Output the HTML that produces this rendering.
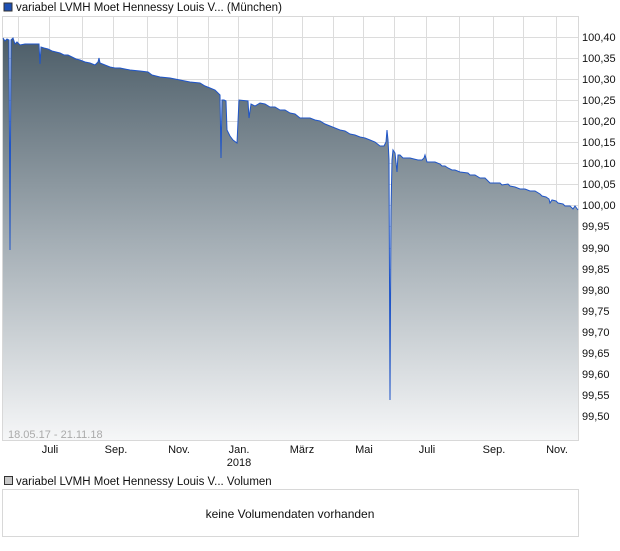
<!DOCTYPE html>
<html><head><meta charset="utf-8"><style>
body{margin:0;background:#fff;width:620px;height:546px;overflow:hidden;font-family:"Liberation Sans",sans-serif;}
</style></head><body>
<svg width="620" height="546" xmlns="http://www.w3.org/2000/svg" font-family="Liberation Sans, sans-serif">
<defs><linearGradient id="g" x1="0" y1="37" x2="0" y2="441" gradientUnits="userSpaceOnUse">
<stop offset="0" stop-color="#4c5d68"/><stop offset="0.5" stop-color="#a3adb4"/><stop offset="1" stop-color="#f6f7f8"/></linearGradient>
<path id="p" d="M3 38L5 41L7 39L9 40L10 250L11 40L13 38L15 44L17 42L20 45L25 44L30 44L37 44L39 44L40 64L41 47L44 48L48 49L52 51L56 52L60 53L64 55L68 55L72 57L76 59L80 60L85 62L90 63L95 65L98 62L99 58L100 63L105 65L110 67L115 68L120 68L130 70L140 71L148 72L152 75L160 77L170 78L180 80L190 82L200 83L205 86L210 88L215 90L218 93L220 95L221 158L222 100L224 100L226 101L227 130L230 136L233 140L237 143L239 100L248 101L249 118L251 104L255 106L260 103L265 104L270 107L275 107L280 110L285 110L290 113L295 114L300 118L305 118L310 118L315 120L320 121L325 124L330 126L335 128L340 130L345 131L350 134L355 135L360 137L365 138L370 140L375 142L380 146L384 146L386 142L387 130L388 140L389 160L390 400L391 210L392 160L393 150L395 153L397 172L398 155L400 155L403 158L410 158L418 160L422 160L424 158L425 155L427 162L435 162L440 164L442 166L445 166L448 168L452 170L455 170L460 172L468 173L470 175L475 175L480 178L485 178L490 183L500 183L502 185L508 184L510 186L515 187L520 189L525 189L530 191L535 191L540 194L542 196L546 197L549 199L550 203L552 200L556 201L558 203L563 204L565 206L570 206L573 209L575 206L578 210"/>
</defs>
<rect x="4" y="3" width="8" height="8" fill="#1d4fb3" stroke="#333" stroke-width="1"/>
<text x="16" y="11" font-size="11.5" fill="#111">variabel LVMH Moet Hennessy Louis V... (München)</text>
<g stroke="#dcdcdc" stroke-width="1">
<path d="M18.5 16V441M49.5 16V441M82.5 16V441M113.5 16V441M147.5 16V441M177.5 16V441M208.5 16V441M238.5 16V441M272.5 16V441M302.5 16V441M333.5 16V441M363.5 16V441M394.5 16V441M426.5 16V441M459.5 16V441M493.5 16V441M523.5 16V441M556.5 16V441"/>
<path d="M2 37.5H578M2 58.5H578M2 79.5H578M2 100.5H578M2 121.5H578M2 142.5H578M2 163.5H578M2 184.5H578M2 205.5H578M2 226.5H578M2 248.5H578M2 269.5H578M2 290.5H578M2 311.5H578M2 332.5H578M2 353.5H578M2 374.5H578M2 395.5H578M2 416.5H578"/>
</g>
<rect x="2.5" y="16.5" width="576" height="424" fill="none" stroke="#d8d8d8"/>
<path d="M3 38L5 41L7 39L9 40L10 250L11 40L13 38L15 44L17 42L20 45L25 44L30 44L37 44L39 44L40 64L41 47L44 48L48 49L52 51L56 52L60 53L64 55L68 55L72 57L76 59L80 60L85 62L90 63L95 65L98 62L99 58L100 63L105 65L110 67L115 68L120 68L130 70L140 71L148 72L152 75L160 77L170 78L180 80L190 82L200 83L205 86L210 88L215 90L218 93L220 95L221 158L222 100L224 100L226 101L227 130L230 136L233 140L237 143L239 100L248 101L249 118L251 104L255 106L260 103L265 104L270 107L275 107L280 110L285 110L290 113L295 114L300 118L305 118L310 118L315 120L320 121L325 124L330 126L335 128L340 130L345 131L350 134L355 135L360 137L365 138L370 140L375 142L380 146L384 146L386 142L387 130L388 140L389 160L390 400L391 210L392 160L393 150L395 153L397 172L398 155L400 155L403 158L410 158L418 160L422 160L424 158L425 155L427 162L435 162L440 164L442 166L445 166L448 168L452 170L455 170L460 172L468 173L470 175L475 175L480 178L485 178L490 183L500 183L502 185L508 184L510 186L515 187L520 189L525 189L530 191L535 191L540 194L542 196L546 197L549 199L550 203L552 200L556 201L558 203L563 204L565 206L570 206L573 209L575 206L578 210L578 440L3 440Z" fill="url(#g)"/>
<use href="#p" fill="none" stroke="#1f55c8" stroke-width="1"/>
<g font-size="11" fill="#111">
<text x="582" y="41">100,40</text><text x="582" y="62">100,35</text><text x="582" y="83">100,30</text><text x="582" y="104">100,25</text><text x="582" y="125">100,20</text><text x="582" y="146">100,15</text><text x="582" y="167">100,10</text><text x="582" y="188">100,05</text><text x="582" y="209">100,00</text><text x="582" y="230">99,95</text><text x="582" y="252">99,90</text><text x="582" y="273">99,85</text><text x="582" y="294">99,80</text><text x="582" y="315">99,75</text><text x="582" y="336">99,70</text><text x="582" y="357">99,65</text><text x="582" y="378">99,60</text><text x="582" y="399">99,55</text><text x="582" y="420">99,50</text>
</g>
<text x="8" y="438" font-size="11" fill="#aaa">18.05.17 - 21.11.18</text>
<g font-size="11" fill="#111" text-anchor="middle">
<text x="50" y="453">Juli</text><text x="116" y="453">Sep.</text><text x="179" y="453">Nov.</text><text x="239" y="453">Jan.</text><text x="239" y="466">2018</text><text x="302" y="453">März</text><text x="364" y="453">Mai</text><text x="427" y="453">Juli</text><text x="494" y="453">Sep.</text><text x="557" y="453">Nov.</text>
</g>
<rect x="4.5" y="476.5" width="8" height="8" fill="#c8c8c8" stroke="#333"/>
<text x="16" y="485" font-size="11.5" fill="#111">variabel LVMH Moet Hennessy Louis V... Volumen</text>
<rect x="2.5" y="489.5" width="576" height="47" fill="#fff" stroke="#d8d8d8"/>
<text x="290" y="518" font-size="12" fill="#111" text-anchor="middle">keine Volumendaten vorhanden</text>
</svg>
</body></html>
